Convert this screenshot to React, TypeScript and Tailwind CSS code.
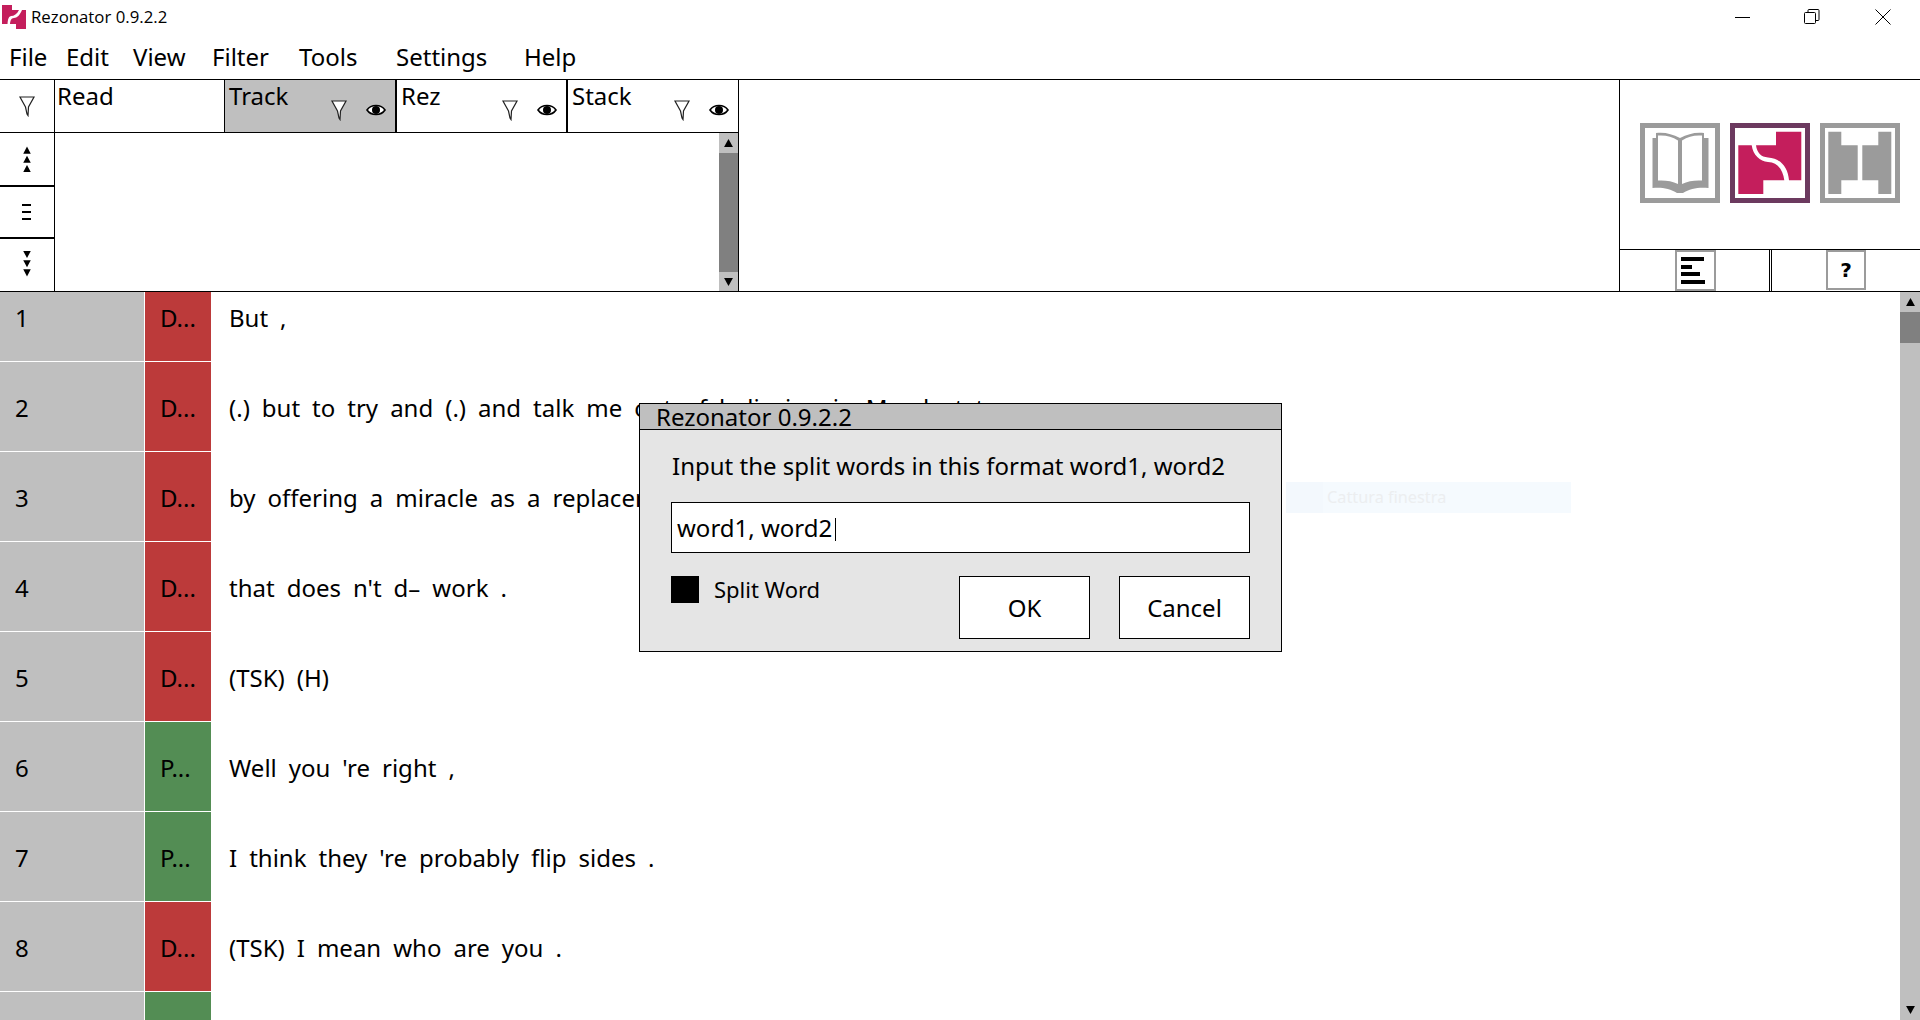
import React from 'react'

const FONT = "font-['Noto_Sans',sans-serif]"

const rows = [
  { n: '1', tag: 'D...', color: 'bg-[#bc3a3a]', words: ['But', ','] },
  { n: '2', tag: 'D...', color: 'bg-[#bc3a3a]', words: ['(.)', 'but', 'to', 'try', 'and', '(.)', 'and', 'talk', 'me', 'out', 'of', 'believing', 'in', 'Mead', 'at', 'to'] },
  { n: '3', tag: 'D...', color: 'bg-[#bc3a3a]', words: ['by', 'offering', 'a', 'miracle', 'as', 'a', 'replacement'] },
  { n: '4', tag: 'D...', color: 'bg-[#bc3a3a]', words: ['that', 'does', "n't", 'd–', 'work', '.'] },
  { n: '5', tag: 'D...', color: 'bg-[#bc3a3a]', words: ['(TSK)', '(H)'] },
  { n: '6', tag: 'P...', color: 'bg-[#538d54]', words: ['Well', 'you', "'re", 'right', ','] },
  { n: '7', tag: 'P...', color: 'bg-[#538d54]', words: ['I', 'think', 'they', "'re", 'probably', 'flip', 'sides', '.'] },
  { n: '8', tag: 'D...', color: 'bg-[#bc3a3a]', words: ['(TSK)', 'I', 'mean', 'who', 'are', 'you', '.'] },
  // row 9 is scrolled almost out of view, only its colours show
  { n: '', tag: '', color: 'bg-[#538d54]', words: [] as string[] },
]

const menus = [
  { label: 'File', w: 'w-[57px]' },
  { label: 'Edit', w: 'w-[67px]' },
  { label: 'View', w: 'w-[79px]' },
  { label: 'Filter', w: 'w-[87px]' },
  { label: 'Tools', w: 'w-[97px]' },
  { label: 'Settings', w: 'w-[128px]' },
  { label: 'Help', w: 'w-[60px]' },
]

function Funnel() {
  return (
    <svg width="18" height="22" viewBox="0 0 18 22" fill="none">
      <path d="M2 2 H16 L10.5 12 L10 20.5 L9 19 L7.5 12 Z" stroke="#222" strokeWidth="1.2" fill="#fff" />
    </svg>
  )
}

function Eye() {
  return (
    <svg width="20" height="14" viewBox="0 0 20 14">
      <path d="M1 7 C5 1 15 1 19 7 C15 13 5 13 1 7 Z" fill="#fff" stroke="#000" strokeWidth="1.6" />
      <circle cx="10" cy="7" r="4" fill="#000" />
    </svg>
  )
}

function Triangles({ down }: { down?: boolean }) {
  return (
    <svg width="10" height="27" viewBox="0 0 12 32" fill="#000">
      {down ? (
        <>
          <path d="M1.5 1 H10.5 L6 9.5 Z" />
          <path d="M1.5 12 H10.5 L6 20.5 Z" />
          <path d="M1.5 23 H10.5 L6 31.5 Z" />
        </>
      ) : (
        <>
          <path d="M6 .5 L10.5 9 H1.5 Z" />
          <path d="M6 11.5 L10.5 20 H1.5 Z" />
          <path d="M6 22.5 L10.5 31 H1.5 Z" />
        </>
      )}
    </svg>
  )
}

function Arrow({ down }: { down?: boolean }) {
  return (
    <svg width="9" height="8" viewBox="0 0 10 9" fill="#000">
      <path d={down ? 'M0 0 H10 L5 9 Z' : 'M5 0 L10 9 H0 Z'} />
    </svg>
  )
}

function TabIcons() {
  return (
    <div className="absolute right-[9px] top-[19px] flex items-center gap-[18px]">
      <Funnel />
      <Eye />
    </div>
  )
}

function BookIcon() {
  return (
    <svg viewBox="0 0 80 80" className="w-[80px] h-[80px]">
      <rect x="2.5" y="2.5" width="75" height="75" fill="#fff" stroke="#9b9b9b" strokeWidth="5" />
      <path d="M12.5 15 H16 V10 C25 9 32 11 40 15 C48 11 55 9 64 10 V15 H68.5 V65 C60 64 50 65 43 70 H37 C30 65 20 64 12.5 65 Z" fill="#9b9b9b" />
      <path d="M18 12.5 C26 12 32 13.5 38 17.5 V61 C32 58 25 57 18 57.5 Z" fill="#fff" />
      <path d="M42 17.5 C48 13.5 54 12 62 12.5 V57.5 C55 57 48 58 42 61 Z" fill="#fff" />
    </svg>
  )
}

function RezIcon() {
  return (
    <svg viewBox="0 0 80 80" className="w-[80px] h-[80px]">
      <rect x="2.5" y="2.5" width="75" height="75" fill="#fff" stroke="#6c3a5f" strokeWidth="5" />
      <path d="M8.3 22.3 H21.7 C23 32 30 38.5 38 39 C48 39.5 53 47 54.3 57.3 H33.3 V71 H8.3 Z" fill="#c41e5c" />
      <path d="M46 8.7 H71.3 V57.3 H59 C58 44 50 35 38 34.5 C31 34 27 30 26 22.3 H46 Z" fill="#c41e5c" />
    </svg>
  )
}

function StackIcon() {
  return (
    <svg viewBox="0 0 80 80" className="w-[80px] h-[80px]">
      <rect x="2.5" y="2.5" width="75" height="75" fill="#fff" stroke="#9b9b9b" strokeWidth="5" />
      <path d="M8.3 8.7 H21.3 V22.3 H37.7 V57.3 H21.3 V71 H8.3 Z" fill="#9b9b9b" />
      <path d="M71.3 8.7 H58.3 V22.3 H42.3 V57.3 H58.3 V71 H71.3 Z" fill="#9b9b9b" />
    </svg>
  )
}

function Logo() {
  return (
    <svg width="24" height="24" viewBox="0 0 24 24">
      <path d="M0 0 H10 V5 H17 C15 9 12 11 9 11 C6 12 6 15 5.5 19 H0 Z" fill="#c41e5c" />
      <path d="M20 5 H24 V24 H14 V19 H8 C8.5 15 9 13.5 12 13 C15 13 18 10 20 5 Z" fill="#c41e5c" />
    </svg>
  )
}

export default function App() {
  return (
    <div className={`relative w-[1920px] h-[1020px] overflow-hidden bg-white text-black flex flex-col ${FONT}`}>
      {/* title bar */}
      <div className="h-[34px] flex items-center shrink-0">
        <div className="ml-[2px] flex"><Logo /></div>
        <span className="ml-[5px] text-[16.8px] font-['Open_Sans',sans-serif]">Rezonator 0.9.2.2</span>
        <div className="ml-auto flex items-center">
          <svg width="16" height="16" viewBox="0 0 16 16" className="mr-[53px]">
            <path d="M0 8.5 H15" stroke="#000" strokeWidth="1" />
          </svg>
          <svg width="16" height="16" viewBox="0 0 16 16" className="mr-[55px]" fill="none" stroke="#000" strokeWidth="1">
            <rect x=".5" y="3.5" width="11" height="11" rx="1" />
            <path d="M4 3.5 V1.5 Q4 .5 5 .5 H14 Q15 .5 15 1.5 V10.5 Q15 11.5 14 11.5 H11.5" />
          </svg>
          <svg width="16" height="16" viewBox="0 0 16 16" className="mr-[29px]" stroke="#000" strokeWidth="1">
            <path d="M.5 .5 L15.5 15.5 M15.5 .5 L.5 15.5" />
          </svg>
        </div>
      </div>

      {/* menu */}
      <div className="h-[45px] flex items-center pl-[9px] text-[24px] shrink-0">
        {menus.map((m) => (
          <span key={m.label} className={m.w}>{m.label}</span>
        ))}
      </div>

      {/* top panels */}
      <div className="h-[213px] shrink-0 flex border-y border-black">
        <div className="w-[739px] flex flex-col border-r border-black shrink-0">
          <div className="h-[53px] flex border-b border-black shrink-0">
            <div className="w-[55px] border-r border-black flex items-center justify-center pr-[1px] shrink-0">
              <Funnel />
            </div>
            <div className="w-[170px] shrink-0 pl-[2px] text-[24px] leading-[32px] border-r border-black">Read</div>
            <div className="w-[172px] shrink-0 relative pl-[4px] text-[24px] leading-[32px] border-r-2 border-black bg-[#bfbfbf]">
              Track
              <TabIcons />
            </div>
            <div className="w-[171px] shrink-0 relative pl-[4px] text-[24px] leading-[32px] border-r-2 border-black">
              Rez
              <TabIcons />
            </div>
            <div className="flex-1 relative pl-[4px] text-[24px] leading-[32px]">
              Stack
              <TabIcons />
            </div>
          </div>
          <div className="flex-1 flex min-h-0">
            <div className="w-[55px] border-r border-black flex flex-col shrink-0">
              <div className="h-[54px] flex items-center justify-center pr-[1px] border-b-2 border-black"><Triangles /></div>
              <div className="h-[52px] flex flex-col items-center justify-center gap-[5px] pr-[1px] border-b-2 border-black">
                <div className="w-[9px] h-[2px] bg-black" />
                <div className="w-[9px] h-[2px] bg-black" />
                <div className="w-[9px] h-[2px] bg-black" />
              </div>
              <div className="flex-1 flex items-center justify-center pr-[1px] pb-[3px]"><Triangles down /></div>
            </div>
            <div className="flex-1" />
            <div className="w-[19px] flex flex-col bg-[#808080]">
              <div className="h-[20px] bg-[#bfbfbf] flex items-center justify-center"><Arrow /></div>
              <div className="flex-1" />
              <div className="h-[19px] bg-[#bfbfbf] flex items-center justify-center"><Arrow down /></div>
            </div>
          </div>
        </div>
        <div className="flex-1" />
        <div className="w-[301px] border-l border-black flex flex-col shrink-0">
          <div className="flex-1 flex items-center pl-[20px] gap-[10px] pb-[3px]">
            <BookIcon />
            <RezIcon />
            <StackIcon />
          </div>
          <div className="h-[42px] border-t border-black flex">
            <div className="w-[149px] flex justify-center pl-[2px]">
              <div className="w-[41px] h-[41px] border-[2px] border-[#9b9b9b] flex flex-col justify-center gap-[3.5px] pl-[4px]">
                <div className="w-[23px] h-[4px] bg-black" />
                <div className="w-[11px] h-[4px] bg-black" />
                <div className="w-[19px] h-[4px] bg-black" />
                <div className="w-[24px] h-[4px] bg-black" />
              </div>
            </div>
            <div className="w-[3px] border-x border-black" />
            <div className="flex-1 pl-[54px]">
              <div className="w-[40px] h-[40px] border-[2px] border-[#9b9b9b] flex items-center justify-center text-[20px] font-bold font-['DejaVu_Sans',sans-serif]">?</div>
            </div>
          </div>
        </div>
      </div>

      {/* discourse rows */}
      <div className="flex-1 flex min-h-0">
        <div className="flex-1 flex flex-col">
          {rows.map((r, i) => (
            <div key={i} className={`flex shrink-0 border-b border-white ${i === 0 ? 'h-[70px] items-start' : 'h-[90px] items-center'}`}>
              <div className={`w-[144px] h-full bg-[#bfbfbf] pl-[15px] text-[24px] flex ${i === 0 ? 'items-start pt-[8px]' : 'items-center pt-[3px]'}`}>
                {r.n}
              </div>
              <div className={`w-[66px] h-full ml-[1px] ${r.color} pl-[15px] text-[24px] flex ${i === 0 ? 'items-start pt-[8px]' : 'items-center pt-[3px]'}`}>
                {r.tag}
              </div>
              <div className={`pl-[18px] text-[24px] flex gap-[12px] whitespace-nowrap ${i === 0 ? 'pt-[8px]' : 'pt-[3px]'}`}>
                {r.words.map((w, j) => (
                  <span key={j}>{w}</span>
                ))}
              </div>
            </div>
          ))}
        </div>
        <div className="w-[20px] flex flex-col bg-[#bfbfbf] shrink-0">
          <div className="h-[20px] flex items-center justify-center"><Arrow /></div>
          <div className="h-[31px] bg-[#808080]" />
          <div className="flex-1" />
          <div className="h-[20px] flex items-center justify-center"><Arrow down /></div>
        </div>
      </div>

      {/* leftover capture tooltip */}
      <div className="absolute left-[1286px] top-[482px] w-[285px] h-[31px] bg-[#f5fafe] flex items-center text-[16.3px] text-[#eceef0]">
        <div className="w-[37px] h-full bg-[#f3f8fd]" />
        <span className="ml-[4px]">Cattura finestra</span>
      </div>

      {/* split word dialog */}
      <div className="absolute left-[639px] top-[403px] w-[643px] h-[249px] bg-[#e5e5e5] border border-black flex flex-col">
        <div className="h-[26px] bg-[#bfbfbf] border-b border-black pl-[16px] text-[24px] leading-[25px] shrink-0 whitespace-nowrap">Rezonator 0.9.2.2</div>
        <div className="flex-1 px-[31px] pt-[18px]">
          <div className="pl-[1px] text-[24px] leading-[36px]">Input the split words in this format word1, word2</div>
          <div className="mt-[18px] h-[51px] border border-black bg-white pl-[5px] flex items-center text-[24px]">
            word1, word2<span className="ml-[3px] mt-[4px] w-[1px] h-[23px] bg-black" />
          </div>
          <div className="mt-[23px] flex">
            <div className="w-[28px] h-[27px] bg-black" />
            <span className="ml-[15px] text-[22px] leading-[27px]">Split Word</span>
            <div className="ml-auto flex gap-[29px]">
              <div className="w-[131px] h-[63px] border border-black bg-white flex items-center justify-center text-[24px]">OK</div>
              <div className="w-[131px] h-[63px] border border-black bg-white flex items-center justify-center text-[24px]">Cancel</div>
            </div>
          </div>
        </div>
      </div>
    </div>
  )
}
